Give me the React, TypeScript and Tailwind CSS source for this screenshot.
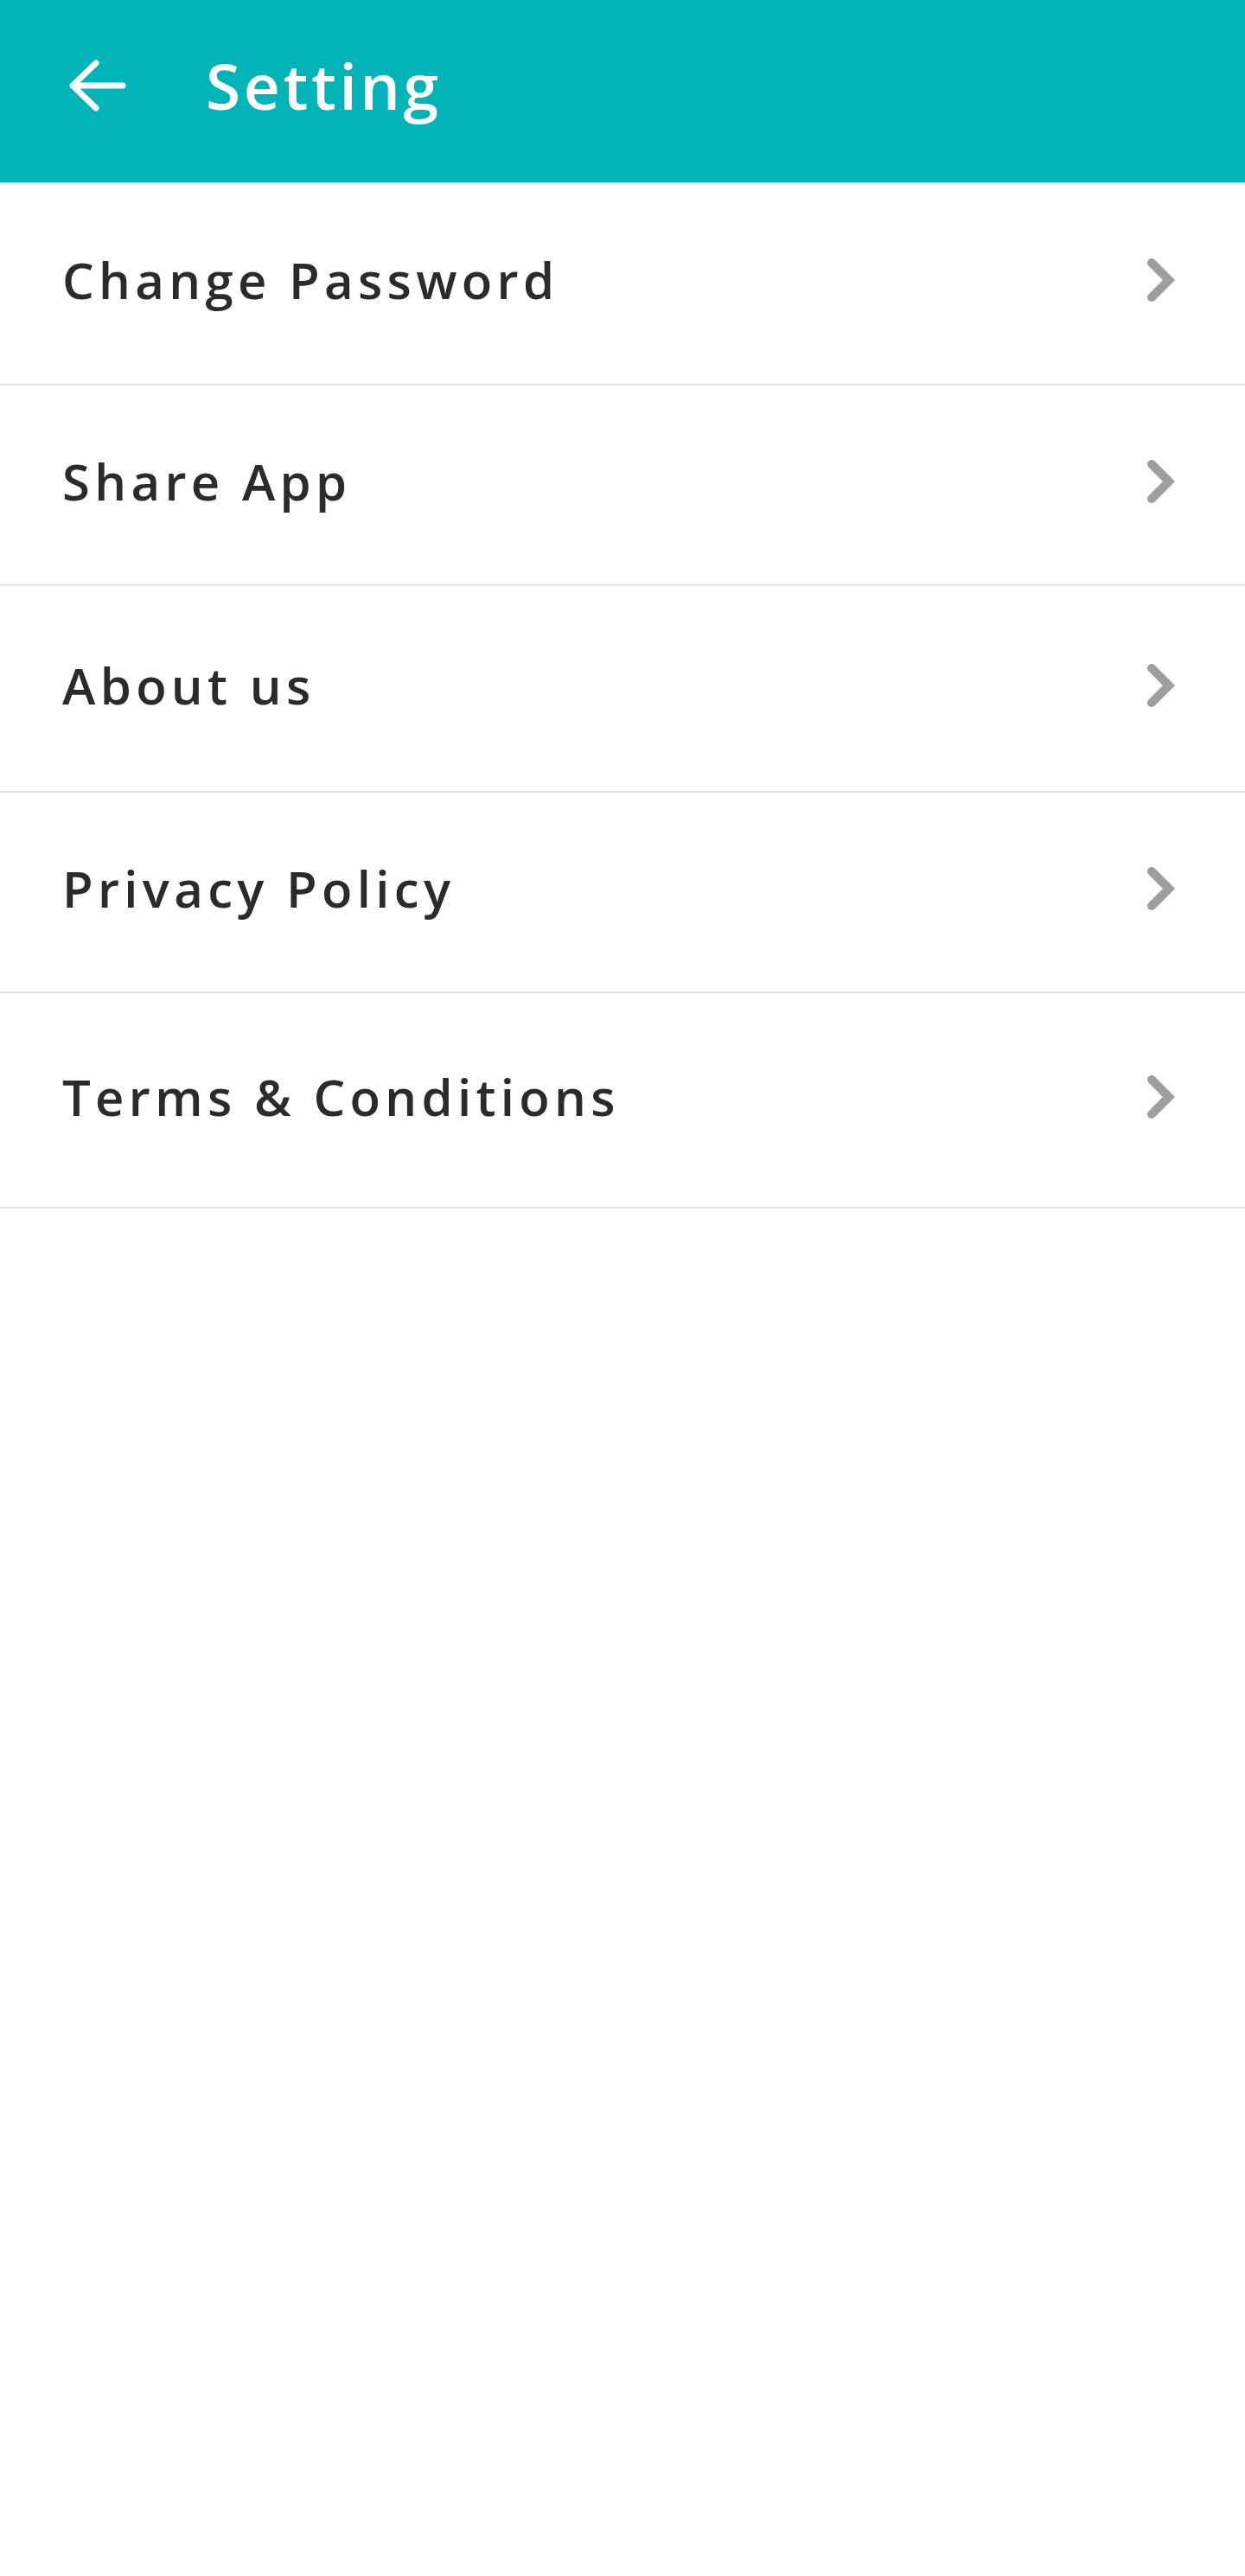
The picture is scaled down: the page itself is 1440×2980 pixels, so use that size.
import { ReactNode } from "react";

// Settings screen: teal app bar + plain list of links with chevrons.

type Item = { label: string; h: string };

const ITEMS: Item[] = [
  { label: "Change Password", h: "h-[235px]" },
  { label: "Share App", h: "h-[232px]" },
  { label: "About us", h: "h-[239px]" },
  { label: "Privacy Policy", h: "h-[232px]" },
  { label: "Terms & Conditions", h: "h-[249px]" },
];

function BackArrow() {
  return (
    <svg width="68" height="64" viewBox="0 0 68 64" fill="none" aria-hidden>
      <path
        d="M64 32H6M33 6L6 32l27 26"
        stroke="#fff"
        strokeWidth="7"
        strokeLinecap="round"
        strokeLinejoin="round"
      />
    </svg>
  );
}

function Chevron() {
  return (
    <svg width="36" height="56" viewBox="0 0 36 56" fill="none" overflow="visible" aria-hidden>
      <polyline
        points="8,8 28,28 8,48"
        stroke="#9e9e9e"
        strokeWidth="10"
        strokeLinecap="round"
        strokeLinejoin="miter"
      />
    </svg>
  );
}

function Row({ item }: { item: Item }): ReactNode {
  return (
    <li
      className={`${item.h} flex items-center justify-between border-b-2 border-[#e2e2e2] pb-[8px] pl-[72px] pr-[80px]`}
    >
      <span className="text-[58px] font-semibold leading-none tracking-[0.092em] text-[#2b2b2b]">
        {item.label}
      </span>
      <Chevron />
    </li>
  );
}

export default function App() {
  return (
    <div className="min-h-[2980px] bg-white font-['Open_Sans',sans-serif]">
      <header className="flex h-[211px] items-center bg-[#00b4b7] pb-[14px] pl-[78px]">
        <BackArrow />
        <h1 className="ml-[92px] text-[73px] font-semibold leading-none tracking-[0.05em] text-white">
          Setting
        </h1>
      </header>
      <ul>
        {ITEMS.map((it) => (
          <Row key={it.label} item={it} />
        ))}
      </ul>
    </div>
  );
}
